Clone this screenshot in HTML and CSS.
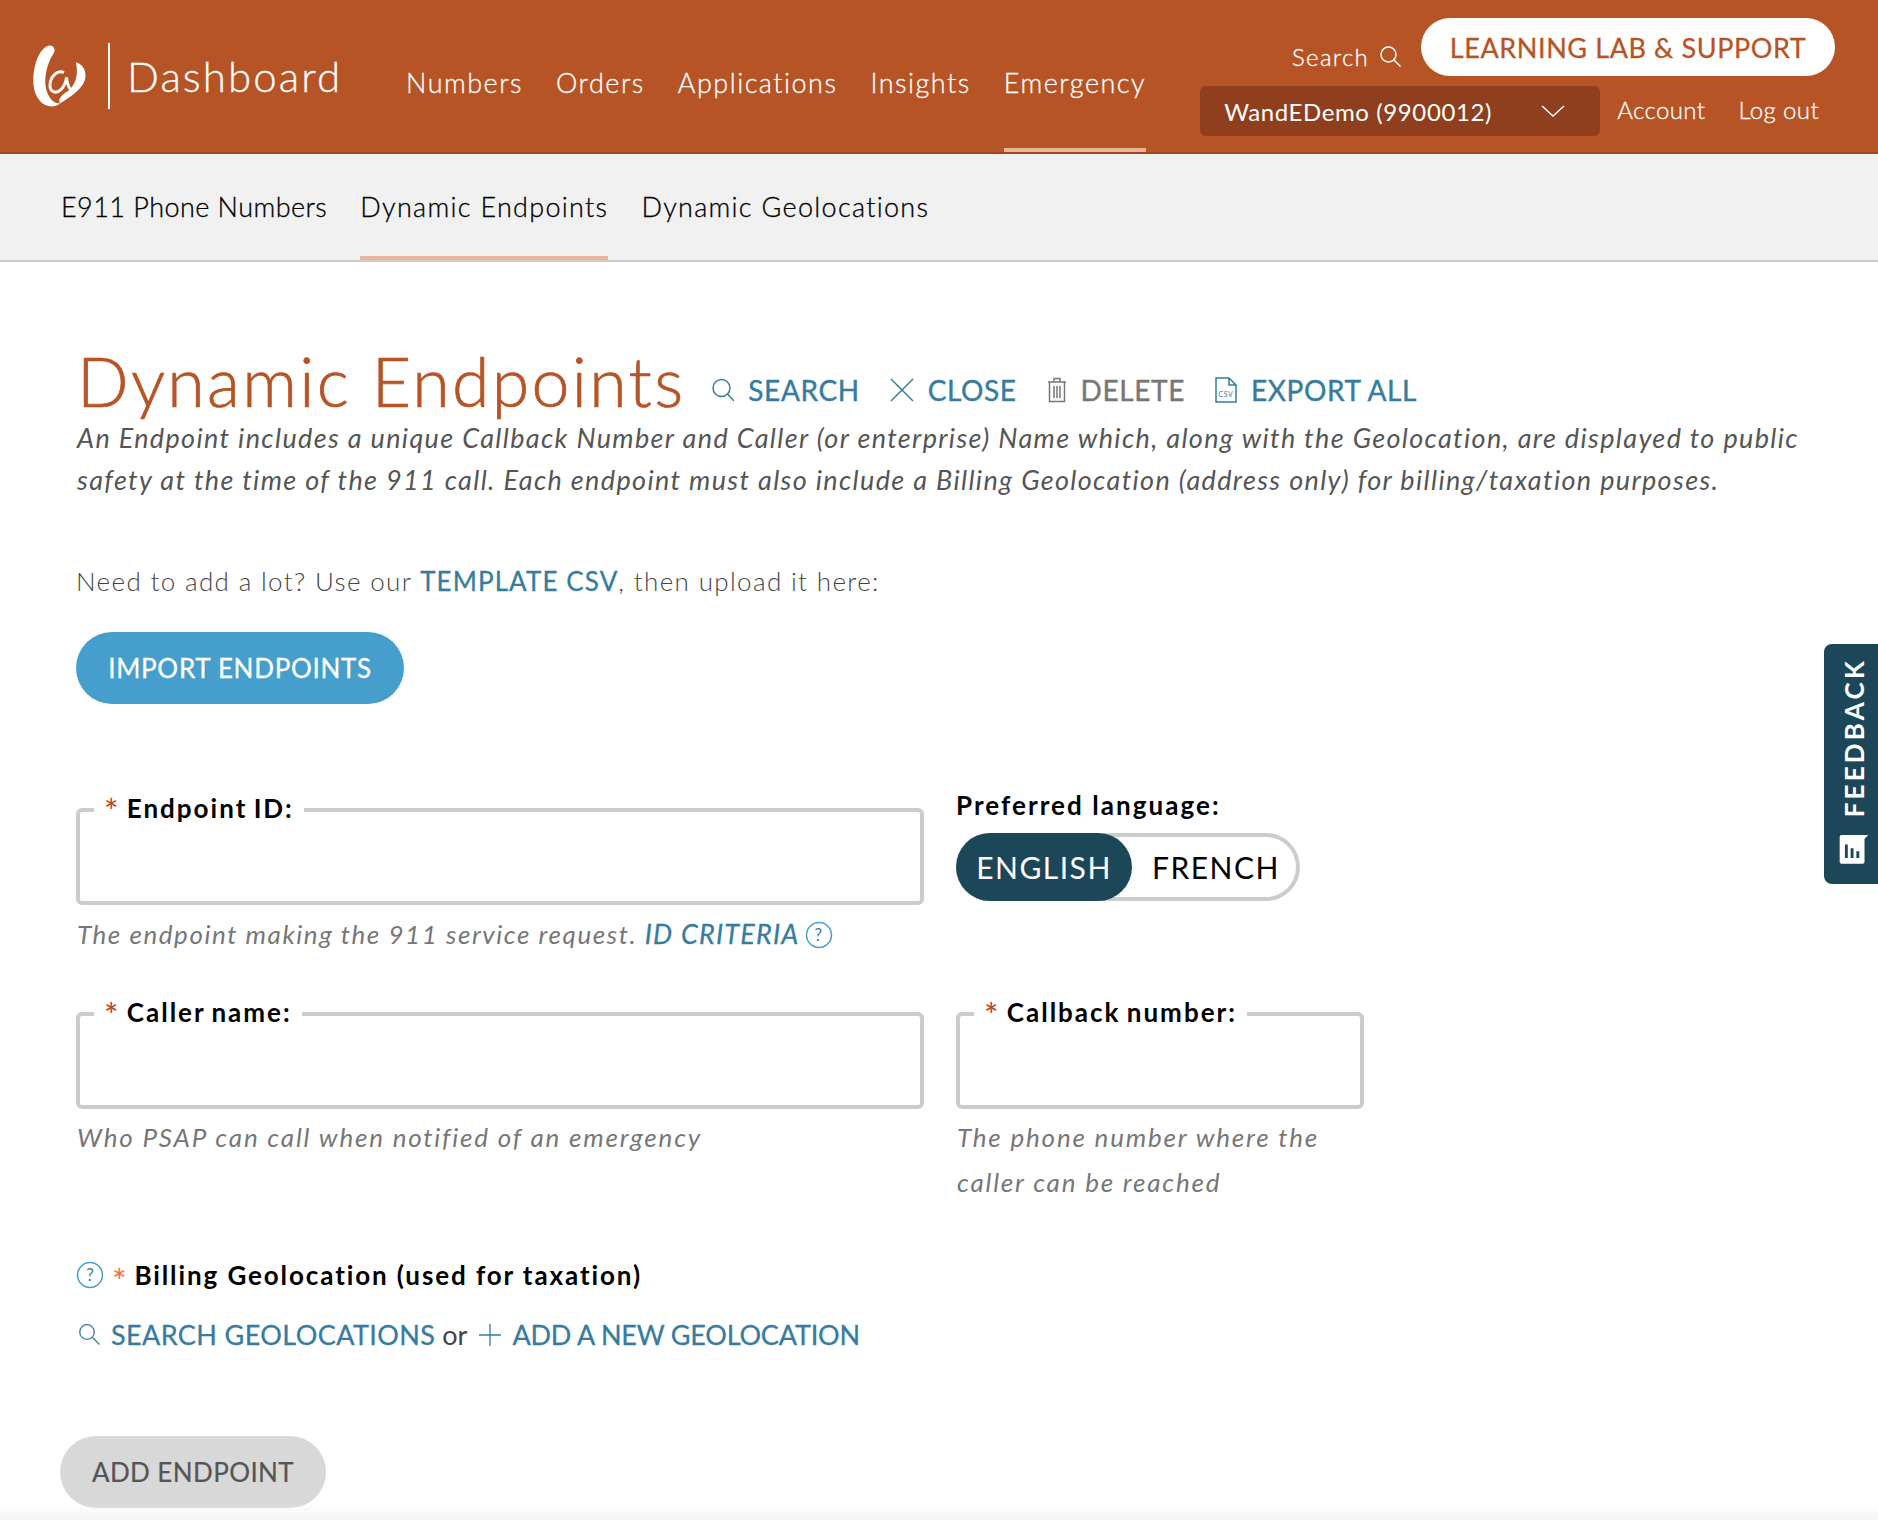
FILE: index.html
```html
<!DOCTYPE html>
<html lang="en">
<head>
  <meta charset="UTF-8">
  <title>Dynamic Endpoints</title>
  <link rel="stylesheet" href="styles.css">
</head>
<body>
  <header class="topbar">
    <a class="brand" href="#">
      <svg class="brand-logo" viewBox="37 25 172 194" width="56" height="63">
        <path d="M100 29C88 20 62 38 50 75 36 118 36 170 62 198 78 216 104 220 124 204 105 208 88 190 80 160 72 125 85 78 104 50 109 41 105 33 100 29z" fill="#fff"/>
        <path d="M172 78C200 86 210 118 194 145 178 170 150 188 124 204 114 196 128 178 148 167 166 152 182 125 172 78z" fill="#fff"/>
        <path d="M135 110C116 100 93 122 92 148 92 170 110 176 124 164 136 153 141 140 143 125 146 146 150 160 158 163" fill="none" stroke="#fff" stroke-width="9"/>
      </svg>
      <span class="brand-name">Dashboard</span>
    </a>
    <nav class="mainnav">
      <a href="#">Numbers</a>
      <a href="#">Orders</a>
      <a href="#">Applications</a>
      <a href="#">Insights</a>
      <a class="active" href="#">Emergency</a>
    </nav>
    <div class="topright">
      <div class="topright-row">
        <a class="top-search" href="#">Search
          <svg viewBox="0 0 21 21" width="21" height="21"><circle cx="8.500" cy="8.500" r="7.500"/><path d="M14 14 20.500 20.500"/></svg>
        </a>
        <a class="support" href="#">LEARNING LAB &amp; SUPPORT</a>
      </div>
      <div class="topright-row second">
        <div class="account-select">
          <span>WandEDemo (9900012)</span>
          <svg viewBox="0 0 24 12" width="24" height="12"><path d="M1 1 12 11 23 1"/></svg>
        </div>
        <a href="#">Account</a>
        <a href="#">Log out</a>
      </div>
    </div>
  </header>

  <nav class="subnav">
    <a class="tight" href="#">E911 Phone Numbers</a>
    <a class="active" href="#">Dynamic Endpoints</a>
    <a href="#">Dynamic Geolocations</a>
  </nav>

  <main class="content">
    <div class="title-row">
      <h1>Dynamic Endpoints</h1>
      <a class="action" href="#">
        <svg viewBox="0 0 22 24" width="22" height="24"><circle cx="9.500" cy="10" r="8.500"/><path d="M15.500 16 22 23"/></svg>
        SEARCH
      </a>
      <a class="action" href="#">
        <svg viewBox="0 0 24 24" width="24" height="24"><path d="M1 1 23 23M23 1 1 23"/></svg>
        CLOSE
      </a>
      <a class="action disabled" href="#">
        <svg viewBox="0 0 20 26" width="20" height="26"><path d="M1 5h18M7 5V1.500h6V5M2.500 5v19.500h15V5M7 9v12M10 9v12M13 9v12"/></svg>
        DELETE
      </a>
      <a class="action" href="#">
        <svg viewBox="0 0 22 26" width="22" height="26"><path d="M1 1h13l7 7v17H1zM14 1v7h7"/><text x="11" y="20" text-anchor="middle">CSV</text></svg>
        EXPORT ALL
      </a>
    </div>
    <p class="desc">An Endpoint includes a unique Callback Number and Caller (or enterprise) Name which, along with the Geolocation, are displayed to public safety at the time of the 911 call. Each endpoint must also include a Billing Geolocation (address only) for billing/taxation purposes.</p>

    <p class="need">Need to add a lot? Use our <a href="#">TEMPLATE CSV</a>, then upload it here:</p>
    <button class="btn-import" type="button">IMPORT ENDPOINTS</button>

    <div class="form-row first">
      <div class="col-wide">
        <fieldset class="field">
          <legend><span class="req">*</span> Endpoint ID:</legend>
          <input type="text">
        </fieldset>
        <p class="hint tight">The endpoint making the 911 service request. <a href="#">ID CRITERIA</a>
          <svg class="help" viewBox="0 0 28 28" width="28" height="28"><circle cx="14" cy="14" r="12.500"/><text x="14" y="20" text-anchor="middle">?</text></svg>
        </p>
      </div>
      <div class="col-lang">
        <div class="lang-label">Preferred language:</div>
        <div class="toggle">
          <span class="on">ENGLISH</span>
          <span>FRENCH</span>
        </div>
      </div>
    </div>

    <div class="form-row second">
      <div class="col-wide">
        <fieldset class="field">
          <legend><span class="req">*</span> Caller name:</legend>
          <input type="text">
        </fieldset>
        <p class="hint">Who PSAP can call when notified of an emergency</p>
      </div>
      <div class="col-narrow">
        <fieldset class="field">
          <legend><span class="req">*</span> Callback number:</legend>
          <input type="text">
        </fieldset>
        <p class="hint">The phone number where the caller can be reached</p>
      </div>
    </div>

    <div class="billing">
      <svg class="help" viewBox="0 0 28 28" width="28" height="28"><circle cx="14" cy="14" r="12.500"/><text x="14" y="20" text-anchor="middle">?</text></svg>
      <span class="req light">*</span>
      <strong>Billing Geolocation (used for taxation)</strong>
    </div>
    <div class="geo-links">
      <svg class="geo-icon search" viewBox="0 0 21 21" width="21" height="21"><circle cx="8" cy="8" r="7.300"/><path d="M13.500 13.500 20.500 20.500"/></svg>
      <a class="geo-search" href="#">SEARCH GEOLOCATIONS</a>
      <span class="or">or</span>
      <svg class="geo-icon plus" viewBox="0 0 22 22" width="22" height="22"><path d="M11 0V22M0 11H22"/></svg>
      <a class="geo-add" href="#">ADD A NEW GEOLOCATION</a>
    </div>

    <button class="btn-add" type="button" disabled>ADD ENDPOINT</button>
  </main>

  <a class="feedback" href="#">
    <svg viewBox="0 0 30 30" width="30" height="30"><path d="M2 0H30L26 4V28a2 2 0 0 1-2 2H2a2 2 0 0 1-2-2V2a2 2 0 0 1 2-2z" fill="#fff"/><path d="M7 10V24M13 14V24M19 17V24" stroke="#1c4759" stroke-width="3" fill="none"/></svg>
    <span>FEEDBACK</span>
  </a>
  <div class="bottom-fade"></div>
</body>
</html>
```

FILE: styles.css
```css
html, body {
  height: 100%;
}

body {
  margin: 0;
  overflow: hidden;
  font-family: "Lato", sans-serif;
  font-size: 26px;
  color: #000;
  background: #fff;
}

a {
  text-decoration: none;
  color: inherit;
}

/* top bar */
.topbar {
  display: flex;
  align-items: stretch;
  box-sizing: border-box;
  height: 154px;
  padding-left: 32px;
  background: #b75425;
  border-bottom: 2px solid #a3451f;
  color: #fff;
}

.brand {
  display: flex;
  align-items: center;
  width: 374px;
  height: 152px;
}

.brand-logo {
  flex: none;
}

.brand-name {
  margin-left: 20px;
  padding-left: 17px;
  border-left: 2px solid #fff;
  font-size: 42px;
  font-weight: 300;
  letter-spacing: 2.100px;
  line-height: 66px;
  -webkit-text-stroke: .3px #fff;
}

.mainnav {
  display: flex;
  gap: 33px;
}

.mainnav a {
  display: flex;
  align-items: center;
  height: 152px;
  box-sizing: border-box;
  padding-top: 12px;
  font-size: 27px;
  font-weight: 300;
  letter-spacing: 1.500px;
  -webkit-text-stroke: .3px #fff;
}

.mainnav a.active {
  box-shadow: inset 0 -4px 0 #e9b69b;
}

.topright {
  display: flex;
  flex-direction: column;
  margin-left: 54px;
  padding-top: 18px;
}

.topright-row {
  display: flex;
  align-items: center;
  justify-content: flex-end;
  gap: 20px;
  font-weight: 300;
}

.top-search {
  display: flex;
  align-items: center;
  gap: 11px;
  padding-top: 19px;
  font-size: 24px;
  letter-spacing: 1.300px;
  -webkit-text-stroke: .3px #fff;
}

.top-search svg {
  fill: none;
  stroke: #fff;
  stroke-width: 1.500;
}

.support {
  display: flex;
  align-items: center;
  justify-content: center;
  width: 414px;
  height: 58px;
  border-radius: 29px;
  background: #fff;
  color: #b75425;
  font-size: 27px;
  font-weight: 400;
  letter-spacing: .6px;
  -webkit-text-stroke: .3px #b75425;
}

.topright-row.second {
  gap: 0;
  margin-top: 10px;
  font-size: 24px;
  letter-spacing: .4px;
}

.topright-row.second > a {
  margin-left: 17px;
  margin-right: 16px;
  padding-bottom: 4px;
  -webkit-text-stroke: .3px #fff;
}

.account-select {
  display: flex;
  align-items: center;
  justify-content: space-between;
  box-sizing: border-box;
  width: 400px;
  height: 50px;
  padding: 0 35px 0 24px;
  border-radius: 6px;
  background: #8f3f1d;
  font-size: 24px;
  font-weight: 400;
  letter-spacing: .6px;
}

.account-select svg {
  fill: none;
  stroke: #fff;
  stroke-width: 1.500;
}

/* sub navigation */
.subnav {
  display: flex;
  gap: 33px;
  box-sizing: border-box;
  height: 108px;
  padding-left: 61px;
  background: #f1f1f1;
  border-bottom: 2px solid #ccc;
}

.subnav a {
  display: flex;
  align-items: center;
  box-sizing: border-box;
  height: 106px;
  padding-bottom: 2px;
  font-size: 27px;
  font-weight: 300;
  letter-spacing: 1.300px;
  -webkit-text-stroke: .3px #000;
}

.subnav a.tight {
  letter-spacing: .45px;
}

.subnav a.active {
  box-shadow: inset 0 -4px 0 #e9b69b;
}

/* page content */
.content {
  padding: 0 60px 0 76px;
}

.title-row {
  display: flex;
  align-items: flex-end;
  height: 56px;
  margin-top: 91px;
}

h1 {
  margin: 0 27px 0 1px;
  font-size: 68px;
  font-weight: 300;
  line-height: 56px;
  letter-spacing: 2.300px;
  color: #b75425;
  -webkit-text-stroke: .7px #b75425;
}

.action {
  display: flex;
  align-items: center;
  gap: 14px;
  height: 30px;
  margin-right: 30px;
  margin-bottom: 4px;
  font-size: 28px;
  font-weight: 400;
  letter-spacing: .6px;
  color: #377c9e;
  -webkit-text-stroke: .4px #377c9e;
}

.action svg {
  fill: none;
  stroke: currentColor;
  stroke-width: 1.500;
  -webkit-text-stroke: 0;
}

.action svg text {
  fill: currentColor;
  stroke: none;
  font-size: 7px;
}

.action.disabled {
  color: #777;
  -webkit-text-stroke: .4px #777;
}

.desc {
  margin: 8px 0 0 1px;
  font-size: 27px;
  font-style: italic;
  font-weight: 400;
  line-height: 42px;
  letter-spacing: 1.350px;
  color: #555;
}

.need {
  margin: 59px 0 0;
  font-size: 26px;
  font-weight: 300;
  line-height: 42px;
  letter-spacing: 1.350px;
  color: #444;
}

.need a {
  font-weight: 400;
  letter-spacing: 1.100px;
  color: #377c9e;
  -webkit-text-stroke: .3px #377c9e;
}

.btn-import,
.btn-add {
  display: block;
  border: 0;
  font-family: inherit;
  font-size: 26px;
  letter-spacing: .7px;
}

.btn-import {
  width: 328px;
  height: 72px;
  margin-top: 30px;
  border-radius: 36px;
  background: #459ecb;
  color: #fff;
  -webkit-text-stroke: .3px #fff;
}

/* form */
.form-row {
  display: flex;
  align-items: flex-start;
  gap: 32px;
}

.form-row.first {
  margin-top: 89px;
  height: 204px;
}

.form-row.second {
  height: 261px;
}

.col-wide {
  width: 848px;
}

.col-narrow {
  width: 408px;
}

.col-lang {
  margin-top: -5px;
}

.field {
  box-sizing: border-box;
  height: 112px;
  margin: 0;
  padding: 0 0 0 14px;
  border: 4px solid #ccc;
  border-radius: 6px;
}

.field legend {
  position: relative;
  top: -2px;
  padding: 0 10px;
  font-size: 26px;
  font-weight: 700;
  line-height: 34px;
  letter-spacing: 2px;
  word-spacing: -2px;
}

.field input {
  display: block;
  width: 90%;
  height: 60px;
  border: 0;
  outline: 0;
  background: none;
}

.req {
  color: #c9401d;
  font-size: 34px;
  font-weight: 400;
  line-height: 0;
  vertical-align: -6px;
}

.req.light {
  color: #f2724f;
  vertical-align: 0;
  padding-top: 12px;
}

.hint {
  margin: 6px 0 0 1px;
  font-size: 26px;
  font-style: italic;
  font-weight: 400;
  line-height: 45px;
  letter-spacing: 1.800px;
  color: #777;
}

.hint.tight {
  letter-spacing: 1.550px;
}

.hint a {
  font-size: 27px;
  letter-spacing: 1.200px;
  color: #377c9e;
  -webkit-text-stroke: .3px #377c9e;
}

.hint .help {
  margin-left: -2px;
}

.help {
  vertical-align: -5px;
  fill: none;
  stroke: #459ecb;
  stroke-width: 1.500;
}

.help text {
  fill: #377c9e;
  stroke: none;
  font-size: 17px;
  font-style: normal;
}

.lang-label {
  font-size: 26px;
  font-weight: 700;
  line-height: 34px;
  letter-spacing: 2.050px;
}

.toggle {
  display: flex;
  box-sizing: border-box;
  width: 344px;
  height: 68px;
  margin-top: 11px;
  border-radius: 34px;
  box-shadow: inset 0 0 0 4px #ccc;
  font-size: 30px;
  letter-spacing: 1.500px;
}

.toggle span {
  display: flex;
  align-items: center;
  justify-content: center;
  width: 168px;
  height: 68px;
}

.toggle .on {
  width: 176px;
  border-radius: 34px;
  background: #1c4759;
  color: #fff;
}

.billing {
  display: flex;
  align-items: center;
  gap: 8px;
  height: 34px;
}

.billing strong {
  font-size: 26px;
  letter-spacing: 1.900px;
}

.geo-links {
  display: flex;
  align-items: center;
  margin-top: 26px;
  margin-left: 3px;
  font-size: 27px;
  color: #377c9e;
  -webkit-text-stroke: .3px #377c9e;
}

.geo-icon {
  fill: none;
  stroke: #377c9e;
  stroke-width: 1.300;
}

.geo-search {
  margin-left: 11px;
  letter-spacing: .4px;
}

.geo-add {
  margin-left: 11px;
  letter-spacing: -.2px;
}

.or {
  margin: 0 12px 0 7px;
  color: #444;
  -webkit-text-stroke: 0;
}

.btn-add {
  width: 266px;
  height: 72px;
  margin: 85px 0 0 -16px;
  border-radius: 36px;
  background: #d8d8d8;
  color: #555;
  letter-spacing: .4px;
  -webkit-text-stroke: .2px #555;
}

/* feedback tab */
.feedback {
  position: fixed;
  top: 644px;
  right: 0;
  display: flex;
  flex-direction: column-reverse;
  align-items: center;
  box-sizing: border-box;
  gap: 18px;
  width: 54px;
  height: 240px;
  padding: 14px 0 20px 5px;
  border-radius: 8px 0 0 8px;
  background: #1c4759;
  color: #fff;
}

.feedback span {
  writing-mode: vertical-rl;
  transform: rotate(180deg);
  font-size: 26px;
  font-weight: 700;
  letter-spacing: 3.200px;
  line-height: 1;
}

.bottom-fade {
  position: fixed;
  left: 0;
  right: 0;
  bottom: 0;
  height: 18px;
  background: linear-gradient(rgba(240, 240, 240, 0), rgba(240, 240, 240, .7));
}
```
